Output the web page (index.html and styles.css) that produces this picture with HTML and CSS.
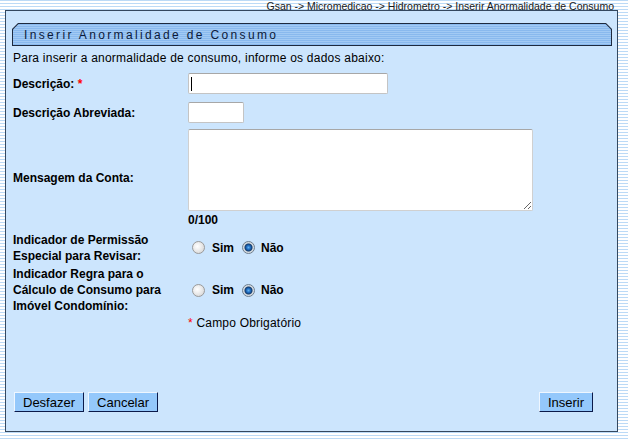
FILE: index.html
```html
<!DOCTYPE html>
<html lang="pt">
<head>
<meta charset="utf-8">
<title>Inserir Anormalidade de Consumo</title>
<link rel="stylesheet" href="styles.css">
</head>
<body>
<div class="breadcrumb">Gsan -&gt; Micromedicao -&gt; Hidrometro -&gt; Inserir Anormalidade de Consumo</div>
<div class="panel">
  <div class="titlebar"><div class="titlebar-inner">Inserir Anormalidade de Consumo</div></div>
  <div class="content">
    <p class="intro">Para inserir a anormalidade de consumo, informe os dados abaixo:</p>
    <div class="form">
      <div class="label r1"><span>Descrição:<span class="req">&nbsp;*</span></span></div>
      <div class="field r1"><span class="caret-wrap"><input type="text" class="input long"></span></div>

      <div class="label r2">Descrição Abreviada:</div>
      <div class="field r2"><input type="text" class="input short"></div>

      <div class="label r3">Mensagem da Conta:</div>
      <div class="field r3 stack">
        <textarea class="textarea"></textarea>
        <div class="counter">0/100</div>
      </div>

      <div class="label r4 multi">Indicador de Permissão<br>Especial para Revisar:</div>
      <div class="field r4">
        <input type="radio" class="radio first" name="perm"><span class="opt">Sim</span>
        <input type="radio" class="radio" name="perm" checked><span class="opt">Não</span>
      </div>

      <div class="label r5 multi">Indicador Regra para o<br>Cálculo de Consumo para<br>Imóvel Condomínio:</div>
      <div class="field r5">
        <input type="radio" class="radio first" name="regra"><span class="opt">Sim</span>
        <input type="radio" class="radio" name="regra" checked><span class="opt">Não</span>
      </div>

      <div class="spacer r6"></div>
      <div class="note r6"><span class="req">*</span> Campo Obrigatório</div>
    </div>
  </div>
  <div class="buttons">
    <div class="left">
      <button class="btn">Desfazer</button>
      <button class="btn">Cancelar</button>
    </div>
    <button class="btn">Inserir</button>
  </div>
</div>
</body>
</html>
```

FILE: styles.css
```css
html, body {
  margin: 0;
  padding: 0;
}

body {
  width: 628px;
  height: 439px;
  overflow: hidden;
  font-family: "Liberation Sans", Arial, sans-serif;
  font-size: 12px;
  color: #000;
  background: repeating-linear-gradient(to bottom, #bcdaf6 0, #bcdaf6 1px, #ffffff 1px, #ffffff 3px);
}

.breadcrumb {
  height: 10px;
  line-height: 12px;
  font-size: 10.5px;
  text-align: right;
  padding-right: 14px;
  color: #1a1a1a;
  white-space: nowrap;
}

.panel {
  box-sizing: border-box;
  margin: 0 10px 0 5px;
  height: 422px;
  border: 1px solid #34485f;
  background: #cce5fd;
  padding: 12px 5px 0 6px;
  display: flex;
  flex-direction: column;
}

.titlebar {
  height: 23px;
  padding: 1px;
  box-sizing: border-box;
  background: #1e2a3e;
  clip-path: polygon(6px 0, calc(100% - 6px) 0, 100% 6px, 100% 100%, 0 100%, 0 6px);
}

.titlebar-inner {
  height: 21px;
  line-height: 22px;
  padding-left: 11px;
  font-size: 12px;
  letter-spacing: 2.35px;
  color: #0c1a3a;
  background: repeating-linear-gradient(to bottom, #89b9ee 0, #89b9ee 1px, #a2caf4 1px, #a2caf4 2px);
  clip-path: polygon(5.5px 0, calc(100% - 5.5px) 0, 100% 5.5px, 100% 100%, 0 100%, 0 5.5px);
}

.content {
  padding-left: 1px;
}

.intro {
  margin: 5px 0 0 0;
  line-height: 14px;
  letter-spacing: 0.23px;
}

.form {
  display: grid;
  grid-template-columns: 175px 1fr;
  grid-template-rows: 4px 29px 29px 102px 37px 48px 18px;
}

.form::before {
  content: "";
  grid-column: 1 / 3;
}

.label {
  font-weight: bold;
  display: flex;
  align-items: center;
  line-height: 14px;
}

.label.multi {
  line-height: 16px;
}

.field {
  display: flex;
  align-items: center;
}

.field.stack {
  flex-direction: column;
  align-items: flex-start;
  justify-content: flex-start;
}

.req {
  color: #ff0000;
}

.caret-wrap {
  position: relative;
  display: inline-block;
}

.caret-wrap::after {
  content: "";
  position: absolute;
  left: 3px;
  top: 4px;
  width: 1px;
  height: 14px;
  background: #000;
}

.input {
  box-sizing: border-box;
  height: 21px;
  margin: 0;
  padding: 0 3px;
  border: 1px solid #c4c4c4;
  border-top-color: #a7a7a7;
  border-radius: 2px;
  background: #fff;
  font-family: "Liberation Sans", Arial, sans-serif;
  font-size: 12px;
  outline: none;
}

.input.long {
  width: 200px;
}

.input.short {
  width: 56px;
}

.textarea {
  box-sizing: border-box;
  width: 345px;
  height: 82px;
  margin: 2px 0 0 0;
  border: 1px solid #d0d0d0;
  border-top-color: #a7a7a7;
  border-radius: 2px;
  background: #fff;
  font-family: "Liberation Sans", Arial, sans-serif;
  font-size: 12px;
  outline: none;
}

.counter {
  margin-top: 2px;
  font-weight: bold;
  line-height: 14px;
}

.radio {
  appearance: none;
  -webkit-appearance: none;
  box-sizing: border-box;
  width: 13px;
  height: 13px;
  margin: 0 7px 0 4px;
  border-radius: 50%;
  border: 1px solid #9a9a9a;
  background: radial-gradient(circle at 40% 40%, #ffffff 0, #f2f2f2 30%, #cfcfcf 100%);
}

.radio:not(.first) {
  margin-left: 8px;
  margin-right: 6px;
}

.radio:checked {
  border-color: #6f7f8f;
  background: radial-gradient(circle at 50% 50%, #5fb0f0 0, #1f6cc0 2px, #133c6e 3.5px, #cfd6dc 4.5px, #f3f3f3 100%);
}

.opt {
  font-weight: bold;
}

.note {
  line-height: 14px;
  letter-spacing: 0.2px;
  align-self: center;
}

.buttons {
  margin-top: auto;
  margin-bottom: 19px;
  padding: 0 19px 0 2px;
  display: flex;
  justify-content: space-between;
}

.left {
  display: flex;
  gap: 4px;
}

.btn {
  box-sizing: border-box;
  height: 20px;
  margin: 0;
  padding: 0 8px;
  font-family: "Liberation Sans", Arial, sans-serif;
  font-size: 13px;
  color: #000;
  background: #94c8fb;
  border: 1px solid;
  border-color: #eef6ff #0b1a4a #0b1a4a #eef6ff;
  border-radius: 0;
  line-height: 17px;
}
```
